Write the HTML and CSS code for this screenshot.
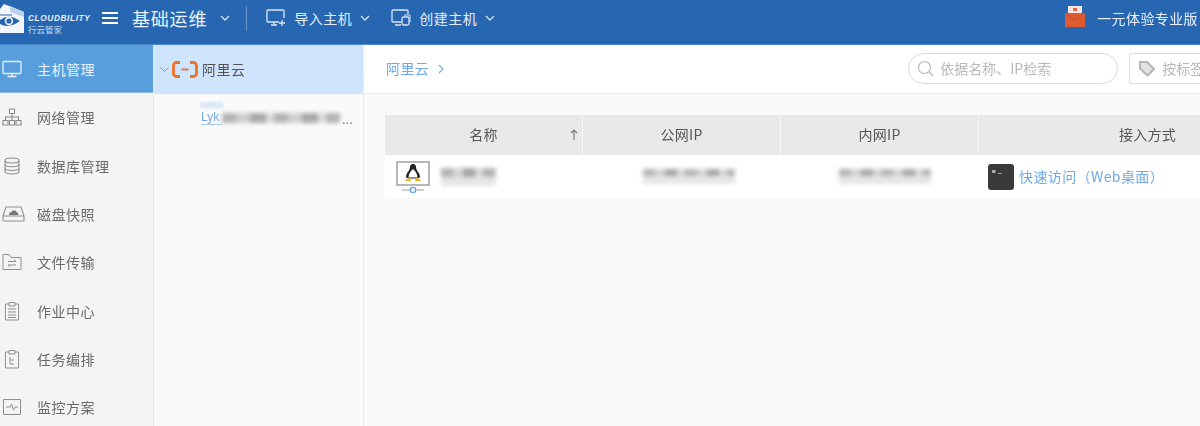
FILE: index.html
```html
<!DOCTYPE html>
<html lang="zh-CN">
<head>
<meta charset="utf-8">
<title>基础运维</title>
<link rel="stylesheet" href="styles.css">
</head>
<body>
<div class="app">
  <header class="topbar">
    <div class="logo">
      <svg class="logo-mark" width="25" height="31" viewBox="0 0 25 31">
        <path d="M0 6 L4 1 L24 9 L24 30 L0 30 Z" fill="#f2f6fb"/>
        <path d="M10 3 L24 9 L24 14 L10 9 Z" fill="#bcd2ea"/>
        <path d="M0 17 Q9 10 20 18 Q9 26 0 21 Z" fill="#2767b2"/>
        <circle cx="9" cy="18" r="3.400" fill="none" stroke="#f2f6fb" stroke-width="1.600"/>
        <path d="M0 12h12" stroke="#2767b2" stroke-width="1"/>
      </svg>
      <div class="logo-text">
        <span class="logo-en">CLOUDBILITY</span>
        <span class="logo-cn">行云管家</span>
      </div>
    </div>
    <svg class="burger" width="18" height="14" viewBox="0 0 18 14"><path d="M1 2h16M1 7h16M1 12h16" stroke="#fff" stroke-width="2"/></svg>
    <span class="title">基础运维</span>
    <svg class="chev title-chev" width="10" height="6" viewBox="0 0 10 6"><path d="M1 1l4 4 4-4" fill="none" stroke="#d5e2f2" stroke-width="1.300"/></svg>
    <span class="divider"></span>
    <svg class="tool-icon first" width="20" height="18" viewBox="0 0 20 18"><path d="M13 13H2a1 1 0 0 1-1-1V2a1 1 0 0 1 1-1h15a1 1 0 0 1 1 1v7M5 16h6M8 13v3M13 14h6M16 11v6" fill="none" stroke="#d9e5f4" stroke-width="1.300"/></svg>
    <span class="tool">导入主机</span>
    <svg class="chev" width="10" height="6" viewBox="0 0 10 6"><path d="M1 1l4 4 4-4" fill="none" stroke="#d5e2f2" stroke-width="1.300"/></svg>
    <svg class="tool-icon second" width="20" height="18" viewBox="0 0 20 18"><path d="M10 13H2a1 1 0 0 1-1-1V2a1 1 0 0 1 1-1h14a1 1 0 0 1 1 1v3M4 16h6" fill="none" stroke="#d9e5f4" stroke-width="1.300"/><rect x="11" y="8" width="7" height="8" rx="1.500" fill="none" stroke="#d9e5f4" stroke-width="1.300"/><path d="M13 6h6v7" fill="none" stroke="#d9e5f4" stroke-width="1"/></svg>
    <span class="tool">创建主机</span>
    <svg class="chev" width="10" height="6" viewBox="0 0 10 6"><path d="M1 1l4 4 4-4" fill="none" stroke="#d5e2f2" stroke-width="1.300"/></svg>
    <div class="promo">
      <svg class="mail" width="20" height="21" viewBox="0 0 20 21"><rect x="3" y="0" width="14" height="9" fill="#f6e6df"/><path d="M8 2h4v3H8z" fill="#d9694a"/><path d="M0 7h20v14H0z" fill="#dd5a33"/><path d="M0 7l10 7 10-7" fill="none" stroke="#c64a27" stroke-width="1"/></svg>
      <span class="promo-text">一元体验专业版</span>
    </div>
  </header>
  <div class="body">
    <nav class="sidebar">
      <a class="nav-item active"><svg width="20" height="18" viewBox="0 0 20 18"><path d="M2 1.500h16a1 1 0 0 1 1 1v10a1 1 0 0 1-1 1H2a1 1 0 0 1-1-1v-10a1 1 0 0 1 1-1zM10 13.500v3M5.500 16.500h9" fill="none" stroke="#e6f1fb" stroke-width="1.300"/></svg><span>主机管理</span></a>
      <a class="nav-item"><svg width="20" height="18" viewBox="0 0 20 18"><path d="M7.500 1h5v4.500h-5zM1 12.500h5V17H1zM7.500 12.500h5V17h-5zM14 12.500h5V17h-5zM10 5.500v7M3.500 12.500V9h13v3.500" fill="none" stroke="#8a8a8a" stroke-width="1.100"/></svg><span>网络管理</span></a>
      <a class="nav-item"><svg width="20" height="18" viewBox="0 0 20 18"><path d="M3 3.500C3 2 6 1 10 1s7 1 7 2.500v11c0 1.500-3 2.500-7 2.500s-7-1-7-2.500zM3 3.500C3 5 6 6 10 6s7-1 7-2.500M3 7.300c0 1.500 3 2.500 7 2.500s7-1 7-2.500M3 11c0 1.500 3 2.500 7 2.500s7-1 7-2.500" fill="none" stroke="#8f8f8f" stroke-width="1.100"/></svg><span>数据库管理</span></a>
      <a class="nav-item"><svg width="23" height="18" viewBox="0 0 23 18"><path d="M4 2h15l3 9v4a1 1 0 0 1-1 1H2a1 1 0 0 1-1-1v-4zM1 11h21" fill="none" stroke="#8f8f8f" stroke-width="1.100"/><path d="M7 10q0-3 2.500-3 1-2.500 3-1.500 2 0 2 1.500 2 .5 2 3z" fill="#777"/></svg><span>磁盘快照</span></a>
      <a class="nav-item"><svg width="20" height="18" viewBox="0 0 20 18"><path d="M1 1.500h6l2 3h10v12H1zM6 8.500h8l-2-1.500M14 12H6l2 1.500" fill="none" stroke="#8f8f8f" stroke-width="1"/></svg><span>文件传输</span></a>
      <a class="nav-item"><svg width="20" height="20" viewBox="0 0 20 20"><path d="M7 3H3.500v16h13V3H13M7 1.500h6V5H7zM6 8h8M6 11h8M6 14h8M6 16.500h8" fill="none" stroke="#8f8f8f" stroke-width="1"/></svg><span>作业中心</span></a>
      <a class="nav-item"><svg width="20" height="20" viewBox="0 0 20 20"><path d="M7 3H3.500v16h13V3H13M7 1.500h6V5H7zM8 8v7h4M8 11h4" fill="none" stroke="#8f8f8f" stroke-width="1"/></svg><span>任务编排</span></a>
      <a class="nav-item"><svg width="20" height="18" viewBox="0 0 20 18"><path d="M1.500 1.500h17v15h-17zM4 9h4l1.500-3 2 6 1.500-3h3" fill="none" stroke="#8f8f8f" stroke-width="1"/></svg><span>监控方案</span></a>
    </nav>
    <aside class="tree">
      <div class="tree-root">
        <svg class="chev" width="9" height="5" viewBox="0 0 9 5"><path d="M.5.500l4 4 4-4" fill="none" stroke="#999" stroke-width="1"/></svg>
        <svg class="ali" width="26" height="17" viewBox="0 0 26 17"><path d="M8 1.500H4.500a3 3 0 0 0-3 3v8a3 3 0 0 0 3 3H8M18 1.500h3.500a3 3 0 0 1 3 3v8a3 3 0 0 1-3 3H18" fill="none" stroke="#ef6f25" stroke-width="2.800"/><path d="M9.500 8.500h7" stroke="#ef6f25" stroke-width="1.800"/></svg>
        <span>阿里云</span>
      </div>
      <div class="tree-child">
        <span class="lyk-tab"></span>
        <span class="lyk">Lyk</span>
        <span class="mask mask-tree"></span>
        <span class="dots">...</span>
      </div>
    </aside>
    <main class="main">
      <div class="crumbs">
        <span class="crumb">阿里云</span>
        <svg class="crumb-sep" width="6" height="10" viewBox="0 0 6 10"><path d="M1 1l4 4-4 4" fill="none" stroke="#7aaee6" stroke-width="1.200"/></svg>
        <div class="search">
          <svg width="17" height="17" viewBox="0 0 17 17"><circle cx="7.500" cy="7.500" r="6" fill="none" stroke="#bbb" stroke-width="1.200"/><path d="M12 12l4 4" stroke="#bbb" stroke-width="1.200"/></svg>
          <span>依据名称、IP检索</span>
        </div>
        <div class="tagbox">
          <svg width="16" height="16" viewBox="0 0 16 16"><path d="M1 1h7l7 7-6.500 6.500L1 7.500z" fill="#e2e2e2" stroke="#b5b5b5" stroke-width="2"/></svg>
          <span>按标签</span>
        </div>
      </div>
      <div class="content">
        <div class="table">
          <div class="row head">
            <div class="cell c1">名称<svg class="sort" width="8" height="11" viewBox="0 0 8 11"><path d="M4 11V1M1 4l3-3 3 3" fill="none" stroke="#777" stroke-width="1.100"/></svg></div>
            <div class="cell c2">公网IP</div>
            <div class="cell c3">内网IP</div>
            <div class="cell c4">接入方式</div>
          </div>
          <div class="row data">
            <div class="cell c1 name-cell">
              <svg width="34" height="32" viewBox="0 0 34 32"><rect x="1" y="1" width="32" height="23" fill="#fff" stroke="#9a9a9a" stroke-width="1.400"/><path d="M17 3c-2.500 0-3.200 2-3.200 4 0 2.500-3.800 5-3.800 9 0 2 14 2 14 0 0-4-3.800-6.500-3.800-9 0-2-.7-4-3.200-4z" fill="#222"/><path d="M17 8c-2.500 2-4.500 5-4.500 8.500h9c0-3.500-2-6.500-4.500-8.500z" fill="#fff"/><path d="M9 19l5-2.500 1 3.500H10zM25 19l-5-2.500-1 3.500h5z" fill="#efb32b"/><path d="M6 29h9M19 29h9" stroke="#9a9a9a" stroke-width="1.200"/><circle cx="17" cy="29" r="2.600" fill="#fff" stroke="#6aa5df" stroke-width="1.400"/></svg>
              <span class="mask mask-name"></span>
            </div>
            <div class="cell c2"><span class="mask mask-ip"></span></div>
            <div class="cell c3"><span class="mask mask-ip2"></span></div>
            <div class="cell c4 access">
              <svg width="26" height="26" viewBox="0 0 26 26"><rect width="26" height="26" rx="3" fill="#3a3a3a"/><rect x="4" y="6" width="3.500" height="3" fill="#aaa"/><path d="M10 9.500h4" stroke="#999"/></svg>
              <a class="link">快速访问（Web桌面）</a>
            </div>
          </div>
        </div>
      </div>
    </main>
  </div>
</div>
</body>
</html>
```
FILE: styles.css
```css
* { box-sizing: border-box; }
html, body { margin: 0; height: 100%; overflow: hidden; background: #fafafa; }
body { font-family: "Noto Sans CJK SC", "Noto Sans", sans-serif; font-size: 14px; color: #666; }
.app { width: 1200px; height: 426px; display: flex; flex-direction: column; overflow: hidden; filter: blur(0.45px); }

.topbar { flex: 0 0 45px; min-height: 0; background: #2767b2; display: flex; align-items: center; color: #e4edf8; border-bottom: 1px solid #4a8bd0; padding-bottom: 8px; }
.logo { width: 101px; height: 36px; display: flex; align-items: flex-start; flex: none; align-self: flex-start; }
.logo-mark { flex: none; margin-top: 3px; }
.logo-text { display: flex; flex-direction: column; line-height: 10px; margin: 13px 0 0 3px; }
.logo-en { font-family: "Liberation Sans", sans-serif; font-size: 8.300px; font-weight: 700; font-style: italic; letter-spacing: .6px; color: #e6eef8; white-space: nowrap; }
.logo-cn { font-size: 8.500px; color: #c7d8ec; margin-top: 1px; }
.burger { flex: none; margin-right: 13px; }
.title { font-size: 18px; letter-spacing: .8px; color: #edf3fa; line-height: 1; white-space: nowrap; }
.chev { flex: none; }
.title-chev { margin-left: 13px; }
.divider { flex: none; width: 1px; height: 25px; background: #6a97cb; margin: 0 19px 0 16px; }
.tool-icon { flex: none; margin-right: 8px; }
.tool-icon.second { margin-left: 21px; margin-right: 8px; }
.tool { font-size: 14px; letter-spacing: .5px; white-space: nowrap; margin-right: 8px; }
.promo { margin-left: auto; display: flex; align-items: center; gap: 12px; margin-right: 2px; }
.mail { margin-top: -3px; flex: none; }
.promo-text { font-size: 14px; letter-spacing: .4px; color: #e9f0f9; white-space: nowrap; }

.body { flex: 1; display: flex; min-height: 0; }
.sidebar { flex: 0 0 154px; background: #f4f4f4; border-right: 1px solid #e9e9e9; display: flex; flex-direction: column; }
.nav-item { flex: 0 0 48.300px; display: flex; align-items: center; color: #6a6a6a; font-size: 14px; letter-spacing: .5px; white-space: nowrap; position: relative; padding-left: 37px; }
.nav-item svg { position: absolute; left: 2px; top: 50%; transform: translateY(-50%); }
.nav-item.active { background: #589ddc; color: #e9f3fc; border-bottom: 1px solid #8cbbe6; }

.tree { flex: 0 0 210px; background: #fafafa; border-right: 1px solid #ececec; display: flex; flex-direction: column; }
.tree-root { flex: 0 0 49px; background: #cfe4fd; display: flex; align-items: center; padding: 0 0 1px 6px; color: #555; font-size: 14px; letter-spacing: .5px; }
.ali { margin: 0 4px 0 3px; flex: none; }
.tree-child { display: flex; align-items: center; height: 20px; margin-top: 14px; padding-left: 47px; position: relative; }
.lyk-tab { position: absolute; left: 46px; top: -6px; width: 23px; height: 6px; background: #dbe9f8; filter: blur(1px); }
.lyk { font-family: "Liberation Sans", sans-serif; font-size: 12px; color: #78a9de; width: 21px; flex: none; overflow: hidden; border-bottom: 1px solid #a9c9ec; line-height: 13px; }
.dots { font-size: 13px; color: #777; margin-left: 2px; line-height: 1; }

.mask { display: block; filter: blur(2px); background-color: #dedede; background-image: linear-gradient(#fff0 0 50%, #e6e6e6 50%), repeating-linear-gradient(90deg, #b4b4b4 0 12px, #d4d4d4 12px 22px, #a6a6a6 22px 34px, #d8d8d8 34px 42px); }
.mask-tree { width: 118px; height: 10px; background-image: repeating-linear-gradient(90deg, #b4b4b4 0 14px, #cfcfcf 14px 28px, #a8a8a8 28px 44px, #dcdcdc 44px 52px); }
.mask-name { width: 55px; height: 18px; margin-left: 11px; }
.mask-ip { width: 92px; height: 15px; margin-left: 15px; }
.mask-ip2 { width: 92px; height: 15px; margin-left: 12px; }

.main { flex: 1; min-width: 0; display: flex; flex-direction: column; }
.crumbs { flex: 0 0 49px; background: #fff; border-bottom: 1px solid #e8e8e8; display: flex; align-items: center; padding-left: 22px; }
.crumb { color: #6fa8e4; letter-spacing: .4px; white-space: nowrap; margin-bottom: 2px; }
.crumb-sep { margin-left: 9px; flex: none; }
.search { flex: none; margin-left: 464px; width: 210px; height: 31px; border: 1px solid #dcdcdc; border-radius: 16px; display: flex; align-items: center; padding-left: 8px; gap: 6px; color: #b8b8b8; white-space: nowrap; margin-bottom: 1px; }
.tagbox { flex: none; margin-left: 11px; width: 80px; height: 31px; border: 1px solid #dcdcdc; border-radius: 2px; display: flex; align-items: center; padding-left: 9px; gap: 7px; color: #b8b8b8; white-space: nowrap; margin-bottom: 1px; }
.search span, .tagbox span { margin-bottom: 2px; }

.content { flex: 1; padding: 21px 0 0 21px; background: #fafafa; }
.table { width: 931px; }
.row { display: flex; }
.head { height: 40px; background: #e9e9e9; color: #555; }
.head .cell { padding-bottom: 3px; letter-spacing: .3px; }
.data { height: 43px; background: #fff; }
.cell { display: flex; align-items: center; justify-content: center; position: relative; white-space: nowrap; }
.c1 { flex: 0 0 197px; }
.c2 { flex: 0 0 198px; }
.c3 { flex: 0 0 198px; }
.c4 { flex: 0 0 338px; }
.head .cell + .cell { border-left: 1px solid #f6f6f6; }
.sort { position: absolute; right: 4px; top: 14px; }
.name-cell { justify-content: flex-start; padding-left: 11px; }
.access { justify-content: flex-start; padding-left: 10px; gap: 5px; }
.link { color: #6fa8e4; letter-spacing: .4px; margin-bottom: 1px; }
```
